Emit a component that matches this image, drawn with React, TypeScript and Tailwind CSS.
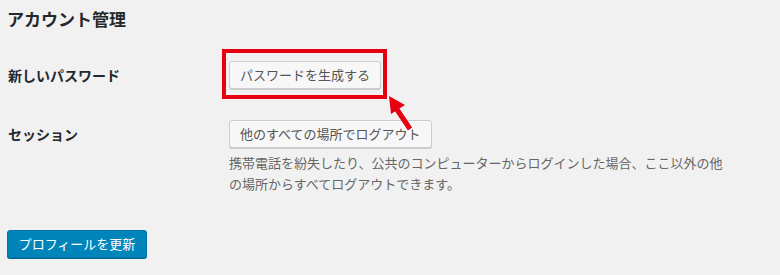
import React from "react";

const font = { fontFamily: '"Noto Sans CJK JP", "Noto Sans", sans-serif' };

export default function App() {
  return (
    <div
      className="w-[780px] h-[275px] bg-[#f1f1f1] text-[#23282d] pl-[7px] pt-[8px] overflow-hidden"
      style={font}
    >
      <h2 className="text-[17px] leading-[22px] font-bold">アカウント管理</h2>

      <div className="mt-[31px] flex items-center">
        <div className="w-[222px] pl-[1px] text-[14px] font-bold leading-[20px]">新しいパスワード</div>
        <div className="relative">
          <button className="h-[28px] px-[10px] rounded-[3px] border border-[#cccccc] bg-[#f7f7f7] shadow-[0_1px_0_#cccccc] text-[13px] leading-[26px] text-[#555555]">
            パスワードを生成する
          </button>
          <div className="absolute left-[-7px] top-[-12px] right-[-6px] bottom-[-10px] border-[4px] border-[#e50012] pointer-events-none" />
          <svg
            className="absolute left-[150px] top-[30px] pointer-events-none"
            width="40"
            height="45"
            viewBox="0 0 40 45"
          >
            <line x1="17" y1="17" x2="31" y2="38" stroke="#e50012" strokeWidth="5" />
            <polygon points="10,5 12,23 26,14" fill="#e50012" />
          </svg>
        </div>
      </div>

      <div className="mt-[31px] flex items-center">
        <div className="w-[222px] pl-[1px] text-[14px] font-bold leading-[20px]">セッション</div>
        <button className="h-[28px] px-[10px] rounded-[3px] border border-[#cccccc] bg-[#f7f7f7] shadow-[0_1px_0_#cccccc] text-[13px] leading-[26px] text-[#555555]">
          他のすべての場所でログアウト
        </button>
      </div>
      <p className="ml-[222px] mt-[4px] w-[500px] text-[13px] leading-[21px] text-[#666666]">
        携帯電話を紛失したり、公共のコンピューターからログインした場合、ここ以外の他の場所からすべてログアウトできます。
      </p>

      <button className="mt-[36px] h-[28px] w-[140px] rounded-[3px] border border-[#0073aa] bg-[#0085ba] shadow-[0_1px_0_#006799] text-[13px] leading-[26px] text-white">
        プロフィールを更新
      </button>
    </div>
  );
}
